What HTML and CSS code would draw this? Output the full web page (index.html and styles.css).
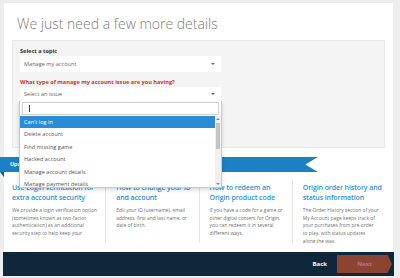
FILE: index.html
```html
<!DOCTYPE html>
<html lang="en">

<head>
    <meta charset="UTF-8">
    <meta name="viewport" content="width=device-width, initial-scale=1.0">
    <title>Contact Us</title>
    <link rel="stylesheet" href="styles.css">
</head>

<body>

    <div class="page">
        <h1>We just need a few more details</h1>

        <form class="topic-box">
            <label class="field-label">Select a topic</label>
            <div class="select">Manage my account<span class="caret"></span></div>

            <label class="field-label required">What type of manage my account issue are you having?</label>
            <div class="select-wrap">
                <div class="select open">Select an issue<span class="caret"></span></div>

                <!-- Open dropdown list -->
                <div class="dropdown">
                    <div class="search"><span class="cursor"></span></div>
                    <div class="options">
                        <ul>
                            <li class="active">Can't log in</li>
                            <li>Delete account</li>
                            <li>Find missing game</li>
                            <li>Hacked account</li>
                            <li>Manage account details</li>
                            <li>Manage payment details</li>
                        </ul>
                        <div class="scrollbar">
                            <span class="arrow up"></span>
                            <span class="thumb"></span>
                            <span class="arrow down"></span>
                        </div>
                    </div>
                </div>
            </div>
        </form>

        <div class="ribbon">Updated articles</div>

        <div class="articles">
            <div class="article">
                <h3>Use Login verification for extra account security</h3>
                <p>We provide a login verification option (sometimes known as two-factor authentication) as an additional security step to help keep your</p>
            </div>
            <div class="article">
                <h3>How to change your ID and account</h3>
                <p>Edit your ID (username), email address, first and last name, or date of birth.</p>
            </div>
            <div class="article">
                <h3>How to redeem an Origin product code</h3>
                <p>If you have a code for a game or other digital content for Origin, you can redeem it in several different ways.</p>
            </div>
            <div class="article">
                <h3>Origin order history and status information</h3>
                <p>The Order History section of your My Account page keeps track of your purchases from pre-order to play, with status updates along the way.</p>
            </div>
        </div>

        <div class="footer">
            <a class="back">Back</a>
            <a class="next">Next</a>
        </div>
    </div>

</body>

</html>
```

FILE: styles.css
```css
/* Basic styling */
body {
    margin: 0;
    background: #ededed;
    font-family: "Open Sans", Arial, sans-serif;
}

.page {
    width: 389px;
    margin: 3px 0 0 4px;
    background: #ffffff;
    padding: 0 8px;
    box-sizing: border-box;
}

h1 {
    margin: 0 0 0 5px;
    padding: 12px 0 7px;
    font-size: 14px;
    font-weight: 300;
    line-height: 18px;
    color: #7d7d7d;
}

.topic-box {
    background: #f4f4f4;
    border: 1px solid #e9e9e9;
    padding: 6px 7px 46px;
    height: 108px;
    box-sizing: border-box;
}

.field-label {
    display: block;
    font-size: 5.6px;
    font-weight: bold;
    color: #333;
    line-height: 8px;
    margin-bottom: 1px;
}

.field-label.required {
    color: #c8372d;
    margin-top: 6px;
}

.select {
    position: relative;
    width: 201px;
    height: 16px;
    line-height: 16px;
    background: #fff;
    font-size: 5.6px;
    color: #666;
    padding-left: 4px;
    box-sizing: border-box;
}

.select.open {
    height: 14px;
    line-height: 14px;
}

.caret {
    position: absolute;
    right: 6px;
    top: 50%;
    margin-top: -1px;
    border-left: 2px solid transparent;
    border-right: 2px solid transparent;
    border-top: 2px solid #666;
}

.select-wrap {
    position: relative;
}

.dropdown {
    position: absolute;
    top: 14px;
    left: -1px;
    width: 201px;
    background: #fff;
    border: 1px solid #c9c9c9;
    border-top: none;
    box-shadow: 0 2px 4px rgba(0, 0, 0, 0.15);
    z-index: 5;
}

.search {
    margin: 1px 2px 1px;
    height: 11px;
    border: 1px solid #cfcfcf;
    position: relative;
}

.cursor {
    position: absolute;
    left: 6px;
    top: 2px;
    width: 1px;
    height: 7px;
    background: #444;
}

.options {
    position: relative;
    height: 71px;
    overflow: hidden;
}

.options ul {
    list-style: none;
    margin: 0;
    padding: 0;
    margin-right: 6px;
}

.options li {
    height: 12.4px;
    line-height: 12.4px;
    font-size: 5.6px;
    color: #555;
    padding-left: 4px;
}

.options li.active {
    background: #2a8cd6;
    color: #fff;
}

.scrollbar {
    position: absolute;
    top: 0;
    right: 0;
    width: 6px;
    height: 100%;
    background: #f1f1f1;
}

.scrollbar .thumb {
    position: absolute;
    left: 1px;
    top: 7px;
    width: 4px;
    height: 26px;
    background: #c4c4c4;
}

.scrollbar .arrow {
    position: absolute;
    left: 1px;
    border-left: 2px solid transparent;
    border-right: 2px solid transparent;
}

.scrollbar .up {
    top: 2px;
    border-bottom: 2px solid #888;
}

.scrollbar .down {
    bottom: 2px;
    border-top: 2px solid #888;
}

/* Blue banner that wraps round the left edge */
.ribbon {
    position: relative;
    margin: 9px 0 0 -12px;
    width: 318px;
    height: 15px;
    line-height: 15px;
    padding-left: 10px;
    box-sizing: border-box;
    background: #1d7fc4;
    color: #fff;
    font-size: 5.4px;
    font-weight: bold;
    clip-path: polygon(0 0, 100% 0, 96% 50%, 100% 100%, 0 100%);
}

.articles {
    position: relative;
    display: grid;
    grid-template-columns: repeat(4, 1fr);
    margin-top: 8px;
    height: 63px;
}

/* fold of the ribbon under the page edge */
.articles::before {
    content: "";
    position: absolute;
    left: -12px;
    top: -8px;
    border-top: 5px solid #0f5a8f;
    border-left: 4px solid transparent;
}

.article {
    border-left: 1px solid #e6e6e6;
    padding-left: 10px;
    overflow: hidden;
}

.article:first-child {
    border-left: none;
    padding-left: 0;
}

.article h3 {
    margin: 3px 0 5px;
    font-size: 7px;
    font-weight: 600;
    line-height: 9.5px;
    letter-spacing: -0.1px;
    color: #2d90d0;
}

.article p {
    margin: 0;
    font-size: 4.9px;
    line-height: 7.7px;
    color: #707070;
    padding-right: 6px;
}

.footer {
    display: flex;
    justify-content: flex-end;
    align-items: center;
    gap: 10px;
    margin: 9px -9px 0 -9px;
    height: 24px;
    padding-right: 2px;
    background: #0f273a;
}

.back {
    font-size: 6px;
    font-weight: bold;
    color: #fff;
}

.next {
    width: 55px;
    height: 18px;
    line-height: 18px;
    text-align: center;
    font-size: 6px;
    font-weight: bold;
    color: #b5798a;
    background: #8a4431;
    clip-path: polygon(0 0, 92% 0, 100% 50%, 92% 100%, 0 100%);
}
```
